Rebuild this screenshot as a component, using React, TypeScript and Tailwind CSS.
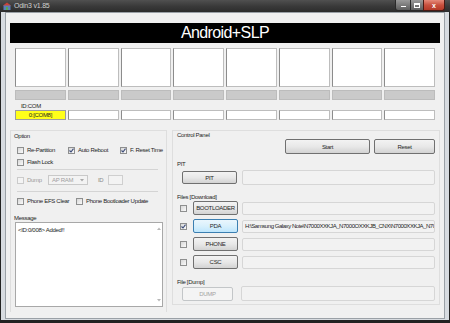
import React from "react";

const txt = "text-[6px] leading-none tracking-[-0.3px] text-[#1e1e1e] whitespace-nowrap";

function Check({ checked, disabled }: { checked?: boolean; disabled?: boolean }) {
  return (
    <span
      className={
        disabled
          ? "flex h-[7px] w-[7px] shrink-0 items-center justify-center border border-[#cbcbcb] bg-[#f4f4f4]"
          : "flex h-[7px] w-[7px] shrink-0 items-center justify-center border border-[#8e8f8f] bg-gradient-to-br from-[#d8d8d8] to-[#fafafa]"
      }
    >
      {checked && (
        <svg width="5" height="5" viewBox="0 0 5 5">
          <path d="M0.5 2.5 L2 4 L4.5 0.6" fill="none" stroke="#3a4a78" strokeWidth="1.1" />
        </svg>
      )}
    </span>
  );
}

function Opt({ label, checked, w, disabled }: { label: string; checked?: boolean; w?: string; disabled?: boolean }) {
  return (
    <div className={`flex items-center gap-[3px] ${w ?? ""}`}>
      <Check checked={checked} disabled={disabled} />
      <span className={disabled ? "text-[6px] leading-none tracking-[-0.3px] text-[#9a9a9a] whitespace-nowrap" : txt}>{label}</span>
    </div>
  );
}

function Btn({ label, className, focus, disabled }: { label: string; className: string; focus?: boolean; disabled?: boolean }) {
  let look = "border-[#707070] bg-gradient-to-b from-[#f3f3f3] via-[#e8e8e8] to-[#d3d3d3] text-[#1e1e1e]";
  if (focus) look = "border-[#3c7fb1] bg-gradient-to-b from-[#eaf6fd] via-[#d9f0fc] to-[#bee6fd] text-[#1e1e1e]";
  if (disabled) look = "border-[#c3c6c8] bg-[#f4f4f4] text-[#a3a3a3]";
  return (
    <div className={`flex shrink-0 items-center justify-center rounded-[2px] border text-[6px] leading-none tracking-[-0.3px] ${look} ${className}`}>
      {label}
    </div>
  );
}

function Field({ children }: { children?: React.ReactNode }) {
  return (
    <div className="flex h-full min-w-0 flex-1 items-center overflow-hidden rounded-[2px] border border-[#d6d6d6] bg-[#f2f2f2] pl-[2px]">
      {children}
    </div>
  );
}

function FileRow({ label, checked }: { label: string; checked?: boolean }) {
  return (
    <div className="flex h-[14px] items-center pl-[7px] pr-[4px]">
      <Check checked={checked} />
      <Btn label={label} focus={label === "PDA"} className="ml-[6px] h-[14px] w-[45px]" />
      <div className="ml-[4px] flex h-[13px] min-w-0 flex-1">
        <Field>
          {checked && (
            <span className="text-[6px] leading-none tracking-[-0.45px] text-[#1e1e1e] whitespace-nowrap">
              {"H:\\Samsung Galaxy Note\\N7000XXKJA_N7000OXXKJB_CNX\\N7000XXKJA_N70"}
            </span>
          )}
        </Field>
      </div>
    </div>
  );
}

export default function App() {
  const slots = [0, 1, 2, 3, 4, 5, 6, 7];
  return (
    <div className="flex h-[323px] w-[450px] flex-col overflow-hidden bg-[#222222] font-['Liberation_Sans',Arial,sans-serif]">
      {/* title bar */}
      <div className="flex h-[12px] shrink-0 items-start bg-gradient-to-b from-[#505050] via-[#3a3a3a] to-[#2c2c2c]">
        <svg className="ml-[3px] mt-[2px]" width="8" height="8" viewBox="0 0 8 8">
          <rect x="0.5" y="3" width="7" height="5" fill="#5a7fb8" />
          <path d="M0 3.5 L4 0.5 L8 3.5 Z" fill="#c8433a" />
          <rect x="3" y="5" width="2" height="3" fill="#5aa84f" />
        </svg>
        <span className="ml-[3px] mt-[2px] text-[7px] leading-none tracking-[-0.2px] text-[#d0d0d0]">Odin3 v1.85</span>
        <div className="ml-auto mr-[5px] flex h-[11px]">
          <div className="flex w-[16px] items-end justify-center rounded-bl-[3px] border border-t-0 border-[#2a2a2a] bg-gradient-to-b from-[#9a9a9a] to-[#5e5e5e] pb-[3px]">
            <span className="h-[1px] w-[5px] bg-white" />
          </div>
          <div className="flex w-[12px] items-center justify-center border-b border-[#2a2a2a] bg-gradient-to-b from-[#9a9a9a] to-[#5e5e5e]">
            <span className="h-[5px] w-[6px] border border-t-2 border-white" />
          </div>
          <div className="flex w-[22px] items-center justify-center rounded-br-[3px] border border-t-0 border-[#4a1a14] bg-gradient-to-b from-[#e58a7a] via-[#c8503e] to-[#b43a28] text-[7px] font-bold leading-none text-white">
            x
          </div>
        </div>
      </div>

      {/* frame */}
      <div className="mx-[1px] mb-[3px] flex flex-1 bg-[#d7dbe0] px-[4px] pb-[1px]">
        <div className="flex flex-1 flex-col border border-[#9aa0a6] bg-[#f0f0f0]">
          {/* banner */}
          <div className="ml-[4px] mt-[10px] flex h-[20px] w-[430px] items-center justify-center bg-black">
            <span className="text-[16px] leading-none tracking-[-0.6px] text-white">Android+SLP</span>
          </div>

          {/* port boxes */}
          <div className="ml-[9px] mt-[5px] grid h-[39px] w-[420px] grid-cols-8 gap-[2px]">
            {slots.map((i) => (
              <div key={i} className="border border-[#bdbdbd] border-l-[#8c8c8c] bg-white" />
            ))}
          </div>
          <div className="ml-[9px] mt-[3px] grid h-[10px] w-[420px] grid-cols-8 gap-[2px]">
            {slots.map((i) => (
              <div key={i} className="border border-[#bcbcbc] bg-[#cacaca]" />
            ))}
          </div>
          <div className="ml-[15px] flex h-[10px] items-center pt-[1px]">
            <span className={txt}>ID:COM</span>
          </div>
          <div className="ml-[9px] grid h-[10px] w-[420px] grid-cols-8 gap-[2px]">
            {slots.map((i) => (
              <div
                key={i}
                className={
                  i === 0
                    ? "flex items-center justify-center border border-[#9c9c9c] bg-[#ffff1a]"
                    : "border border-[#bdbdbd] border-l-[#8c8c8c] bg-white"
                }
              >
                {i === 0 && <span className={txt}>0:[COM8]</span>}
              </div>
            ))}
          </div>

          {/* lower area */}
          <div className="ml-[4px] mt-[10px] flex items-start gap-[5px]">
            {/* left column */}
            <div className="flex h-[182px] w-[157px] flex-col border border-[#dedede] border-b-0">
              <div className="flex h-[9px] items-center pl-[3px]">
                <span className={txt}>Option</span>
              </div>
              <div className="flex flex-col pb-[5px] pl-[6px] pt-[6px]">
                <div className="flex h-[8px] items-center">
                  <Opt label="Re-Partition" w="w-[51px]" />
                  <Opt label="Auto Reboot" checked w="w-[52px]" />
                  <Opt label="F. Reset Time" checked />
                </div>
                <div className="mt-[4px] flex h-[8px] items-center">
                  <Opt label="Flash Lock" />
                </div>
                <div className="mr-[8px] mt-[3px] h-[1px] bg-[#d4d4d4]" />
                <div className="mt-[5px] flex h-[10px] items-center">
                  <Opt label="Dump" disabled w="w-[31px]" />
                  <div className="flex h-[10px] w-[40px] items-center justify-between border border-[#c9c9c9] bg-[#f3f3f3] px-[3px]">
                    <span className="text-[6px] leading-none tracking-[-0.3px] text-[#a0a0a0]">AP RAM</span>
                    <svg width="4" height="3" viewBox="0 0 4 3">
                      <path d="M0 0 L4 0 L2 2.5 Z" fill="#a8a8a8" />
                    </svg>
                  </div>
                  <span className="ml-[10px] text-[6px] leading-none tracking-[-0.3px] text-[#8a8a8a]">ID</span>
                  <div className="ml-[5px] h-[10px] w-[15px] border border-[#cfcfcf] bg-[#f3f3f3]" />
                </div>
                <div className="mr-[8px] mt-[6px] h-[1px] bg-[#d4d4d4]" />
                <div className="mt-[5px] flex h-[8px] items-center">
                  <Opt label="Phone EFS Clear" w="w-[59px]" />
                  <Opt label="Phone Bootloader Update" />
                </div>
              </div>
              <div className="mt-[3px] flex h-[9px] items-center pl-[3px]">
                <span className={txt}>Message</span>
              </div>
              <div className="ml-[4px] flex h-[85px] w-[148px] border border-[#a8a8a8] bg-white">
                <div className="flex flex-1 items-start pl-[2px] pt-[4px]">
                  <span className={txt}>{"<ID:0/008> Added!!"}</span>
                </div>
                <div className="flex w-[7px] flex-col items-center justify-between py-[4px]">
                  <svg width="4" height="3" viewBox="0 0 4 3">
                    <path d="M0 3 L4 3 L2 0.5 Z" fill="#b8b8b8" />
                  </svg>
                  <svg width="4" height="3" viewBox="0 0 4 3">
                    <path d="M0 0 L4 0 L2 2.5 Z" fill="#b8b8b8" />
                  </svg>
                </div>
              </div>
            </div>

            {/* right column */}
            <div className="flex h-[175px] w-[268px] flex-col border border-[#dedede]">
              <div className="flex h-[8px] items-center pl-[4px]">
                <span className={txt}>Control Panel</span>
              </div>
              <div className="flex h-[15px] justify-end gap-[4px] pr-[4px]">
                <Btn label="Start" className="h-[15px] w-[85px]" />
                <Btn label="Reset" className="h-[15px] w-[61px]" />
              </div>
              <div className="mt-[5px] flex h-[9px] items-center pl-[4px]">
                <span className={txt}>PIT</span>
              </div>
              <div className="mt-[2px] flex h-[15px] items-center pl-[9px] pr-[4px]">
                <Btn label="PIT" className="h-[13px] w-[55px]" />
                <div className="ml-[5px] flex h-[15px] min-w-0 flex-1">
                  <Field />
                </div>
              </div>
              <div className="mt-[7px] flex h-[9px] items-center pl-[4px]">
                <span className={txt}>Files [Download]</span>
              </div>
              <div className="flex flex-col gap-[4px]">
                <FileRow label="BOOTLOADER" />
                <FileRow label="PDA" checked />
                <FileRow label="PHONE" />
                <FileRow label="CSC" />
              </div>
              <div className="mt-[8px] flex h-[9px] items-center pl-[4px]">
                <span className={txt}>File [Dump]</span>
              </div>
              <div className="flex h-[15px] items-center pl-[9px] pr-[4px]">
                <Btn label="DUMP" disabled className="h-[14px] w-[51px]" />
                <div className="ml-[8px] flex h-[15px] min-w-0 flex-1">
                  <Field />
                </div>
              </div>
            </div>
          </div>
        </div>
      </div>
    </div>
  );
}
